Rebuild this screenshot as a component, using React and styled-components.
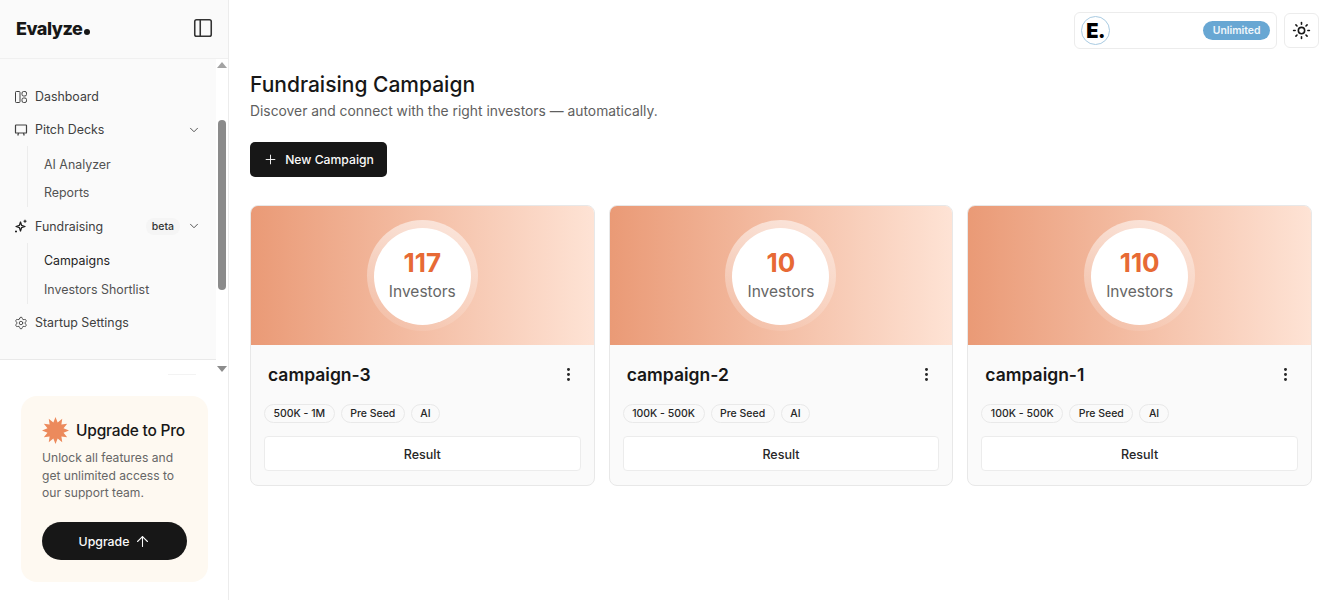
import React from 'react';
import styled, { createGlobalStyle } from 'styled-components';
import { ChevronDown, EllipsisVertical, PanelLeft, Plus, ArrowUp, Sun, Settings } from 'lucide-react';

const GlobalStyle = createGlobalStyle`
    html, body {
        margin: 0;
        background: #fff;
        font-family: Inter, "Liberation Sans", sans-serif;
        color: #171717;
    }
    * { box-sizing: border-box; }
`;

const Page = styled.div`
    display: flex;
    width: 1333px;
    height: 600px;
    overflow: hidden;
`;

const Sidebar = styled.aside`
    position: relative;
    flex: none;
    width: 229px;
    height: 600px;
    border-right: 1px solid #ececec;
    display: flex;
    flex-direction: column;
`;

const SideHeader = styled.div`
    height: 59px;
    background: #fafafa;
    border-bottom: 1px solid #f0f0f0;
    display: flex;
    align-items: center;
    justify-content: space-between;
    padding: 0 14.5px 2px 16px;
`;

const Logo = styled.div`
    font-weight: 800;
    font-size: 18px;
    letter-spacing: -0.5px;
    color: #171717;
    display: flex;
    align-items: baseline;
`;

const LogoDot = styled.span`
    width: 6px;
    height: 6px;
    margin-left: 2px;
    border-radius: 50%;
    background: #171717;
`;

const Nav = styled.nav`
    height: 301px;
    background: #fafafa;
    border-bottom: 1px solid #e9e9e9;
    padding: 21px 12px 0 0;
    display: flex;
    flex-direction: column;
`;

const NavItem = styled.div`
    flex: none;
    height: 33px;
    display: flex;
    align-items: center;
    gap: 7px;
    padding: 0 15px 0 14px;
    font-size: 12.4px;
    color: #404040;
`;

const NavLabel = styled.span`
    flex: 1;
`;

const Beta = styled.span`
    font-size: 10.5px;
    font-weight: 500;
    color: #333;
    background: #f5f5f5;
    border-radius: 8px;
    padding: 2px 6px;
`;

const SubList = styled.div`
    flex: none;
    margin: 0 0 2.5px 27px;
    padding: 4px 0 0 16px;
    border-left: 1px solid #ececec;
`;

const SubItem = styled.div`
    height: 28.5px;
    display: flex;
    align-items: center;
    font-size: 12.4px;
    color: ${(p) => (p.$active ? '#1f1f1f' : '#525252')};
`;

const ScrollBar = styled.div`
    position: absolute;
    top: 59px;
    right: 0;
    width: 12px;
    height: 316px;
    background: #fff;
`;

const ArrowUpTip = styled.div`
    position: absolute;
    top: 3px;
    left: 1px;
    border-left: 5px solid transparent;
    border-right: 5px solid transparent;
    border-bottom: 6px solid #a3a3a3;
`;

const ArrowDownTip = styled.div`
    position: absolute;
    bottom: 3px;
    left: 1px;
    border-left: 5px solid transparent;
    border-right: 5px solid transparent;
    border-top: 6px solid #8c8c8c;
`;

const Thumb = styled.div`
    position: absolute;
    top: 61px;
    left: 2px;
    width: 8px;
    height: 170px;
    border-radius: 4px;
    background: #8b8b8b;
`;

const FaintLine = styled.div`
    width: 28px;
    height: 1px;
    margin: 14px 0 0 168px;
    background: #f3f3f3;
`;

const UpgradeCard = styled.div`
    margin: 21px 20px 0 21px;
    height: 186px;
    border-radius: 16px;
    background: #fef9f1;
    padding: 21px 21px 0;
`;

const UpgradeHead = styled.div`
    display: flex;
    align-items: center;
    gap: 7px;
    font-size: 15.5px;
    font-weight: 500;
    letter-spacing: -0.2px;
    white-space: nowrap;
    color: #171717;
`;

const UpgradeText = styled.p`
    margin: 5px 0 20px;
    font-size: 12.1px;
    line-height: 17.5px;
    color: #666;
`;

const UpgradeButton = styled.div`
    height: 38px;
    padding: 1px 0 0 1px;
    border-radius: 19px;
    background: #171717;
    color: #fafafa;
    font-size: 12.3px;
    font-weight: 500;
    display: flex;
    align-items: center;
    justify-content: center;
    gap: 5px;
`;

const Main = styled.main`
    flex: 1;
    min-width: 0;
    padding: 12px 21px 0;
`;

const TopBar = styled.div`
    display: flex;
    justify-content: flex-end;
    gap: 7px;
    margin-right: -7px;
`;

const Account = styled.div`
    width: 203px;
    height: 37px;
    border: 1px solid #ececec;
    border-radius: 6px;
    padding: 0 6px 0 6px;
    display: flex;
    align-items: center;
    justify-content: space-between;
`;

const Avatar = styled.div`
    width: 29px;
    height: 29px;
    border-radius: 50%;
    border: 1px solid #a9cbe2;
    font-size: 20px;
    font-weight: 900;
    color: #000;
    display: flex;
    align-items: center;
    justify-content: center;
    letter-spacing: -0.5px;
`;

const PlanBadge = styled.span`
    background: #68a7d3;
    color: #eef6fb;
    font-size: 10.4px;
    font-weight: 600;
    border-radius: 10px;
    padding: 2px 9.5px;
    line-height: 15px;
`;

const ThemeButton = styled.div`
    width: 35px;
    height: 35px;
    margin-top: 1px;
    border: 1px solid #ececec;
    border-radius: 6px;
    display: flex;
    align-items: center;
    justify-content: center;
    color: #171717;
`;

const Title = styled.h1`
    margin: 21.5px 0 0;
    font-size: 21px;
    line-height: 28px;
    font-weight: 500;
    color: #171717;
`;

const Subtitle = styled.p`
    margin: 2.5px 0 0;
    font-size: 13.85px;
    line-height: 20px;
    color: #5f5f5f;
`;

const NewButton = styled.div`
    margin-top: 21px;
    width: 137px;
    height: 35px;
    border-radius: 5px;
    background: #171717;
    color: #fafafa;
    font-size: 12.2px;
    font-weight: 500;
    display: flex;
    align-items: center;
    justify-content: center;
    gap: 7px;
`;

const Cards = styled.div`
    margin-top: 28px;
    display: grid;
    grid-template-columns: repeat(3, 1fr);
    column-gap: 14px;
`;

const Card = styled.div`
    height: 281px;
    background: #fafafa;
    border: 1px solid #e8e8e8;
    border-radius: 8px;
    overflow: hidden;
`;

const Banner = styled.div`
    height: 139px;
    display: flex;
    align-items: center;
    justify-content: center;
    background: linear-gradient(90deg, #ea9a76 0%, #fee3d5 100%);
`;

const Ring = styled.div`
    width: 111px;
    height: 111px;
    border-radius: 50%;
    background: linear-gradient(180deg, rgba(255, 255, 255, 0.55), rgba(255, 255, 255, 0.1));
    display: flex;
    align-items: center;
    justify-content: center;
`;

const Circle = styled.div`
    width: 97px;
    height: 97px;
    margin-top: 1px;
    padding-bottom: 2px;
    border-radius: 50%;
    background: #fff;
    display: flex;
    flex-direction: column;
    align-items: center;
    justify-content: center;
`;

const Count = styled.div`
    font-size: 26px;
    line-height: 30px;
    font-weight: 700;
    color: #e76a35;
`;

const CountLabel = styled.div`
    margin-top: 4px;
    font-size: 15.5px;
    line-height: 20px;
    color: #666;
`;

const CardBody = styled.div`
    padding: 17px 13px 0;
`;

const CardTitleRow = styled.div`
    display: flex;
    align-items: center;
    justify-content: space-between;
    padding: 0 4px;
    height: 24px;
    color: #262626;
`;

const CardTitle = styled.div`
    font-size: 17.5px;
    font-weight: 600;
    color: #171717;
`;

const Tags = styled.div`
    display: flex;
    gap: 6px;
    margin-top: 18px;
`;

const Tag = styled.span`
    height: 19px;
    padding: 0 8.5px;
    border: 1px solid #e9e9e9;
    border-radius: 10px;
    font-size: 10.5px;
    font-weight: 500;
    color: #262626;
    display: flex;
    align-items: center;
`;

const ResultButton = styled.div`
    margin-top: 13px;
    height: 35px;
    padding-top: 1px;
    background: #fff;
    border: 1px solid #ececec;
    border-radius: 4px;
    font-size: 12.5px;
    font-weight: 500;
    color: #262626;
    display: flex;
    align-items: center;
    justify-content: center;
`;

const DashIcon = () => (
    <svg width="14" height="14" viewBox="0 0 14 14" fill="none" stroke="currentColor" strokeWidth="1">
        <rect x="1.5" y="1.5" width="4.5" height="11" rx="0.8" />
        <rect x="8" y="1.5" width="4.5" height="4.5" rx="1.6" />
        <rect x="8" y="8" width="4.5" height="4.5" rx="1.6" />
    </svg>
);

const DeckIcon = () => (
    <svg width="14" height="14" viewBox="0 0 14 14" fill="none" stroke="currentColor" strokeWidth="1.2">
        <rect x="1.5" y="2" width="11" height="8" rx="0.6" />
        <path d="M4.5 10 3.8 12.5M9.5 10l.7 2.5" />
    </svg>
);

const SparkIcon = () => (
    <svg width="14" height="14" viewBox="0 0 14 14" fill="none" stroke="#1f1f1f" strokeWidth="1.3" strokeLinejoin="round">
        <path d="M6.5 3 7.6 6.4 11 7.5 7.6 8.6 6.5 12 5.4 8.6 2 7.5 5.4 6.4Z" />
        <path d="M11 .8v3M9.5 2.3h3M2 11.5v2M1 12.5h2" strokeWidth="1.1" />
    </svg>
);

const starPoints = () => {
    const pts = [];
    for (let i = 0; i < 24; i++) {
        const r = i % 2 === 0 ? 13 : 8;
        const a = (Math.PI * i) / 12 - Math.PI / 2;
        pts.push(`${(13 + r * Math.cos(a)).toFixed(2)},${(13 + r * Math.sin(a)).toFixed(2)}`);
    }
    return pts.join(' ');
};

const StarIcon = () => (
    <svg width="27" height="27" viewBox="0 0 26 26">
        <polygon points={starPoints()} fill="#ec8a5c" />
    </svg>
);

const campaigns = [
    { name: 'campaign-3', count: 117, range: '500K - 1M' },
    { name: 'campaign-2', count: 10, range: '100K - 500K' },
    { name: 'campaign-1', count: 110, range: '100K - 500K' },
];

const App = () => {
    const mappedCards = campaigns.map((c) => {
        return (
            <Card key={c.name}>
                <Banner>
                    <Ring>
                        <Circle>
                            <Count>{c.count}</Count>
                            <CountLabel>Investors</CountLabel>
                        </Circle>
                    </Ring>
                </Banner>
                <CardBody>
                    <CardTitleRow>
                        <CardTitle>{c.name}</CardTitle>
                        <EllipsisVertical size={17} strokeWidth={2.2} />
                    </CardTitleRow>
                    <Tags>
                        <Tag>{c.range}</Tag>
                        <Tag>Pre Seed</Tag>
                        <Tag>AI</Tag>
                    </Tags>
                    <ResultButton>Result</ResultButton>
                </CardBody>
            </Card>
        );
    });

    return (
        <Page>
            <GlobalStyle />
            <Sidebar>
                <SideHeader>
                    <Logo>Evalyze<LogoDot /></Logo>
                    <PanelLeft size={22} strokeWidth={1.7} color="#333" />
                </SideHeader>
                <Nav>
                    <NavItem><DashIcon /><NavLabel>Dashboard</NavLabel></NavItem>
                    <NavItem><DeckIcon /><NavLabel>Pitch Decks</NavLabel><ChevronDown size={14} strokeWidth={1.5} /></NavItem>
                    <SubList>
                        <SubItem>AI Analyzer</SubItem>
                        <SubItem>Reports</SubItem>
                    </SubList>
                    <NavItem><SparkIcon /><NavLabel>Fundraising</NavLabel><Beta>beta</Beta><ChevronDown size={14} strokeWidth={1.5} /></NavItem>
                    <SubList>
                        <SubItem $active>Campaigns</SubItem>
                        <SubItem>Investors Shortlist</SubItem>
                    </SubList>
                    <NavItem><Settings size={14} strokeWidth={1.5} /><NavLabel>Startup Settings</NavLabel></NavItem>
                </Nav>
                <ScrollBar>
                    <ArrowUpTip />
                    <Thumb />
                    <ArrowDownTip />
                </ScrollBar>
                <FaintLine />
                <UpgradeCard>
                    <UpgradeHead><StarIcon />Upgrade to Pro</UpgradeHead>
                    <UpgradeText>Unlock all features and get unlimited access to our support team.</UpgradeText>
                    <UpgradeButton>Upgrade <ArrowUp size={17} strokeWidth={1.5} /></UpgradeButton>
                </UpgradeCard>
            </Sidebar>
            <Main>
                <TopBar>
                    <Account>
                        <Avatar>E.</Avatar>
                        <PlanBadge>Unlimited</PlanBadge>
                    </Account>
                    <ThemeButton><Sun size={19} strokeWidth={2} /></ThemeButton>
                </TopBar>
                <Title>Fundraising Campaign</Title>
                <Subtitle>Discover and connect with the right investors — automatically.</Subtitle>
                <NewButton><Plus size={15} strokeWidth={1.5} />New Campaign</NewButton>
                <Cards>{mappedCards}</Cards>
            </Main>
        </Page>
    );
};

export default App;
